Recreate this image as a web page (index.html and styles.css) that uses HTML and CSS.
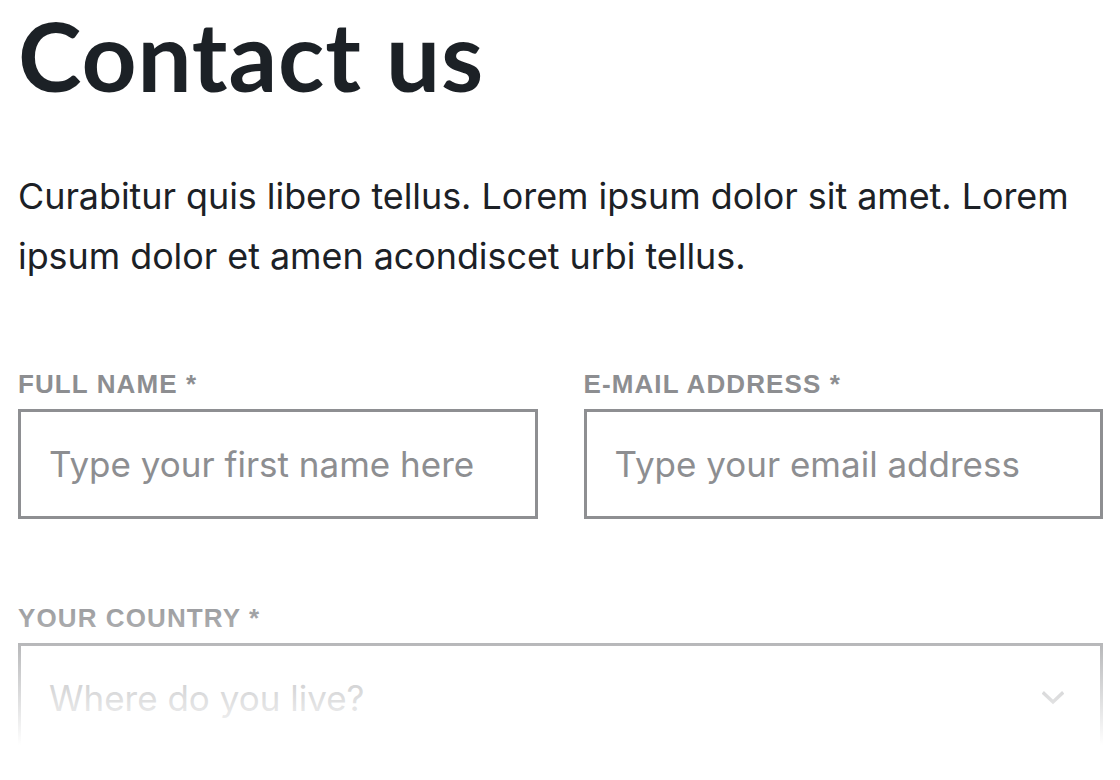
FILE: index.html
```html
<!DOCTYPE html>
<html lang="en">
<head>
<meta charset="utf-8">
<title>Contact us</title>
<link rel="stylesheet" href="styles.css">
</head>
<body>
<main class="page">
  <h1 class="title">Contact us</h1>
  <p class="intro">Curabitur quis libero tellus. Lorem ipsum dolor sit amet. Lorem ipsum dolor et amen acondiscet urbi tellus.</p>
  <form class="form">
    <div class="row two">
      <label class="field">
        <span class="label">FULL NAME *</span>
        <input class="input" type="text" placeholder="Type your first name here">
      </label>
      <label class="field">
        <span class="label">E-MAIL ADDRESS *</span>
        <input class="input" type="email" placeholder="Type your email address">
      </label>
    </div>
    <div class="row">
      <div class="field">
        <span class="label">YOUR COUNTRY *</span>
        <div class="select" role="combobox" aria-expanded="false">
          <span class="select-text">Where do you live?</span>
          <svg class="chevron" width="22" height="14" viewBox="0 0 22 14" aria-hidden="true">
            <polyline points="2,2.5 11,11 20,2.5" fill="none" stroke="currentColor" stroke-width="3.4" stroke-linecap="square"/>
          </svg>
        </div>
      </div>
    </div>
  </form>
</main>
<div class="fade"></div>
</body>
</html>
```
FILE: styles.css
```css
html, body {
  margin: 0;
  padding: 0;
  background: #fff;
}
body {
  width: 1120px;
  height: 780px;
  overflow: hidden;
  position: relative;
  color: #1c2126;
}
.page {
  padding: 0 17px 0 18px;
}
.title {
  margin: 0;
  font-family: "Lato", "DejaVu Sans", sans-serif;
  font-weight: 700;
  font-size: 96px;
  line-height: 110px;
  letter-spacing: 0.9px;
  color: #1c2126;
}
.intro {
  margin: 56px 0 0;
  font-family: "Inter", "Noto Sans", sans-serif;
  font-size: 35.9px;
  line-height: 60px;
  letter-spacing: -0.03px;
  color: #1c2126;
}
.form {
  margin-top: 83px;
  display: flex;
  flex-direction: column;
  gap: 84px;
}
.row.two {
  display: grid;
  grid-template-columns: 1fr 1fr;
  column-gap: 46px;
}
.field {
  display: flex;
  flex-direction: column;
  gap: 10px;
}
.label {
  font-family: "Liberation Sans", Arial, sans-serif;
  font-weight: 700;
  font-size: 26px;
  line-height: 30px;
  letter-spacing: 1.1px;
  color: #8d8e91;
}
.input, .select {
  box-sizing: border-box;
  width: 100%;
  height: 110px;
  margin: 0;
  border: 3px solid #8e8f92;
  border-radius: 0;
  background: #fff;
  padding: 0 28px;
  font-family: "Inter", "Noto Sans", sans-serif;
  font-size: 35px;
  color: #1c2126;
  outline: none;
}
.input::placeholder {
  color: #8d8e91;
  opacity: 1;
}
.select {
  display: flex;
  align-items: center;
  justify-content: space-between;
  padding-right: 36px;
}
.select-text {
  color: #8d8e91;
  line-height: 42px;
}
.chevron {
  color: #8d8e91;
  display: block;
}
.fade {
  position: absolute;
  left: 0;
  right: 0;
  top: 585px;
  bottom: 0;
  background: linear-gradient(to bottom, rgba(255,255,255,0) 0, #fff 160px, #fff 100%);
  pointer-events: none;
}
```
